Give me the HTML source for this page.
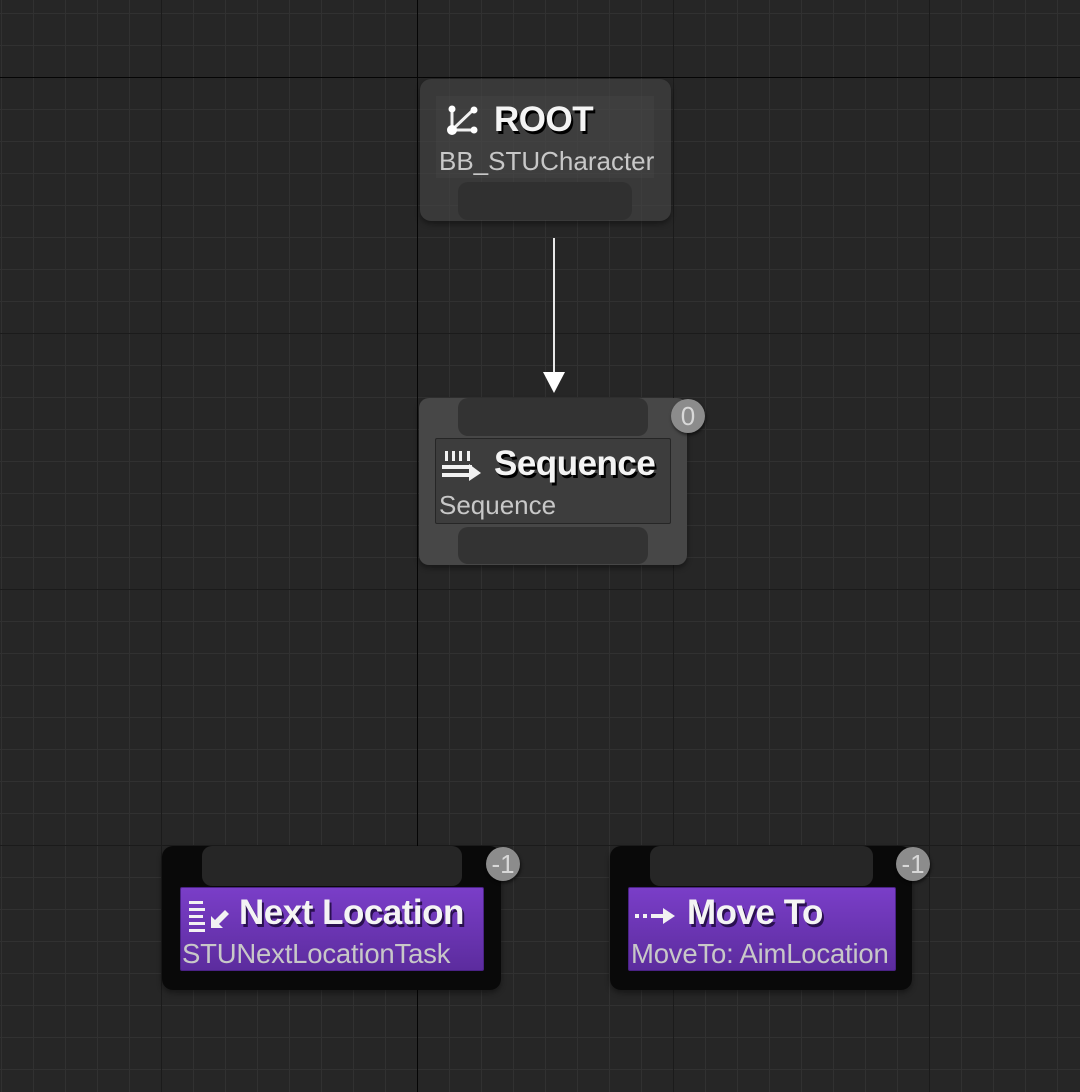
<!DOCTYPE html>
<html><head><meta charset="utf-8"><style>
html,body{margin:0;padding:0}
body{width:1080px;height:1092px;position:relative;overflow:hidden;background:#262626;font-family:"Liberation Sans",sans-serif;
background-image:
linear-gradient(to right,#313131 1px,transparent 1px),
linear-gradient(to bottom,#313131 1px,transparent 1px);
background-size:32px 32px;background-position:1px 13px;}
.l{position:absolute;background:#1b1b1b}
.a{position:absolute}
.title{position:absolute;font-weight:bold;color:#f4f4f4;font-size:35px;text-shadow:2px 3px 0 #000;white-space:nowrap;letter-spacing:-0.5px}
.sub{position:absolute;color:#c8c8c8;font-size:26px;white-space:nowrap}
.badge{position:absolute;width:34px;height:34px;border-radius:50%;background:#8c8c8c;color:#d8d8d8;font-size:26px;line-height:34px;text-align:center;box-shadow:1px 2px 3px rgba(0,0,0,.6)}
.purple .title{text-shadow:2px 3px 0 #2a1050}
.purple .sub{font-size:27.5px;letter-spacing:-0.2px}
</style></head><body>
<div class="l" style="left:161px;top:0;width:1px;height:1092px"></div>
<div class="l" style="left:673px;top:0;width:1px;height:1092px"></div>
<div class="l" style="left:929px;top:0;width:1px;height:1092px"></div>
<div class="l" style="left:0;top:333px;width:1080px;height:1px"></div>
<div class="l" style="left:0;top:589px;width:1080px;height:1px"></div>
<div class="l" style="left:0;top:845px;width:1080px;height:1px"></div>
<div class="l" style="left:417px;top:0;width:1px;height:1092px;background:#050505"></div>
<div class="l" style="left:0;top:77px;width:1080px;height:1px;background:#050505"></div>

<!-- ROOT -->
<div class="a" style="left:420px;top:79px;width:251px;height:142px;border-radius:11px;background:rgba(70,70,70,.6);box-shadow:0 3px 6px rgba(0,0,0,.4)"></div>
<div class="a" style="left:436px;top:96px;width:218px;height:82px;background:rgba(80,80,80,.25)"></div>
<div class="a" style="left:458px;top:182px;width:174px;height:38px;border-radius:10px;background:#303030"></div>
<svg class="a" style="left:443px;top:102px" width="40" height="36" viewBox="0 0 40 36">
<g stroke="#f0f0f0" stroke-width="3" stroke-linecap="round"><line x1="9" y1="28" x2="9" y2="7"/><line x1="9" y1="28" x2="30" y2="8"/><line x1="9" y1="28" x2="31" y2="28"/></g>
<g fill="#fff"><circle cx="9" cy="7" r="3.5"/><circle cx="31" cy="8" r="3.5"/><circle cx="31" cy="28" r="3.5"/><circle cx="9" cy="28" r="5"/></g></svg>
<div class="title" style="left:494px;top:100px">ROOT</div>
<div class="sub" style="left:439px;top:146px">BB_STUCharacter</div>

<!-- arrow -->
<div class="a" style="left:553px;top:238px;width:2px;height:140px;background:#e8e8e8"></div>
<svg class="a" style="left:542px;top:370px" width="24" height="24"><polygon points="1,2 23,2 12,23" fill="#fff"/></svg>

<!-- Sequence -->
<div class="a" style="left:419px;top:398px;width:268px;height:167px;border-radius:10px;background:#474747;box-shadow:0 3px 6px rgba(0,0,0,.4)"></div>
<div class="a" style="left:458px;top:398px;width:190px;height:38px;border-radius:10px;background:#333"></div>
<div class="a" style="left:435px;top:438px;width:234px;height:84px;border:1px solid #262626;background:#3d3d3d;border-radius:2px"></div>
<div class="a" style="left:458px;top:527px;width:190px;height:37px;border-radius:10px;background:#333"></div>
<svg class="a" style="left:441px;top:448px" width="42" height="36" viewBox="0 0 42 36">
<g fill="#f2f2f2"><rect x="4" y="3" width="3" height="10"/><rect x="11" y="3" width="3" height="10"/><rect x="18" y="3" width="3" height="10"/><rect x="26" y="3" width="3" height="10"/>
<rect x="1" y="17" width="30" height="4"/><rect x="1" y="25" width="28" height="4"/><polygon points="28,16 40,25 28,33"/></g></svg>
<div class="title" style="left:494px;top:444px">Sequence</div>
<div class="sub" style="left:439px;top:490px">Sequence</div>
<div class="badge" style="left:671px;top:399px">0</div>

<!-- Next Location -->
<div class="a" style="left:162px;top:846px;width:339px;height:144px;border-radius:11px;background:#090909;box-shadow:0 3px 6px rgba(0,0,0,.4)"></div>
<div class="a" style="left:202px;top:846px;width:260px;height:40px;border-radius:10px;background:#262626"></div>
<div class="a purple" style="left:180px;top:887px;width:304px;height:84px;border-radius:2px;background:linear-gradient(#7a3ec8,#5c2c9e);border:1px solid #4a2285;box-sizing:border-box">
<svg class="a" style="left:6px;top:10px" width="46" height="36" viewBox="0 0 46 36">
<g fill="#f2f2f2"><rect x="2" y="3" width="14" height="3"/><rect x="2" y="10" width="16" height="3"/><rect x="2" y="17" width="14" height="3"/><rect x="2" y="24" width="16" height="3"/><rect x="2" y="31" width="16" height="3"/>
<polygon points="24,18 24,30 36,30 32,26 42,16 38,12 28,22"/></g></svg>
<div class="title" style="left:58px;top:5px">Next Location</div>
<div class="sub" style="left:1px;top:50px">STUNextLocationTask</div>
</div>
<div class="badge" style="left:486px;top:847px">-1</div>

<!-- Move To -->
<div class="a" style="left:610px;top:846px;width:302px;height:144px;border-radius:11px;background:#090909;box-shadow:0 3px 6px rgba(0,0,0,.4)"></div>
<div class="a" style="left:650px;top:846px;width:223px;height:40px;border-radius:10px;background:#262626"></div>
<div class="a purple" style="left:628px;top:887px;width:268px;height:84px;border-radius:2px;background:linear-gradient(#7a3ec8,#5c2c9e);border:1px solid #4a2285;box-sizing:border-box">
<svg class="a" style="left:4px;top:16px" width="48" height="24" viewBox="0 0 48 24">
<g fill="#f2f2f2"><rect x="2" y="10" width="4" height="4"/><rect x="10" y="10" width="4" height="4"/><rect x="18" y="10" width="14" height="4"/><polygon points="30,4 42,12 30,20"/></g></svg>
<div class="title" style="left:58px;top:5px">Move To</div>
<div class="sub" style="left:2px;top:50px">MoveTo: AimLocation</div>
</div>
<div class="badge" style="left:896px;top:847px">-1</div>
</body></html>
